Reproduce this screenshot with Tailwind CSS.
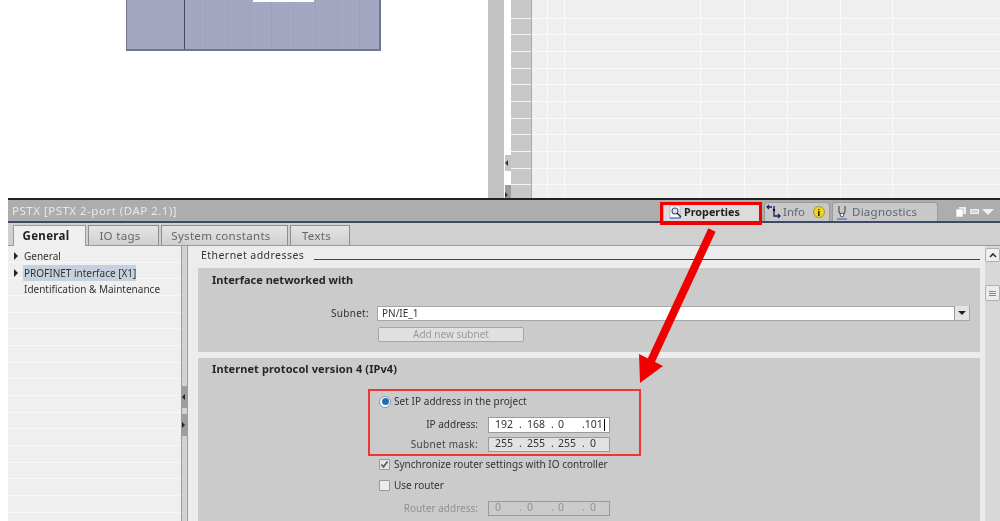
<!DOCTYPE html>
<html lang="en">
<head>
    <meta charset="UTF-8">
    <title>PSTX properties</title>
    <script src="https://cdn.jsdelivr.net/npm/@tailwindcss/browser@4"></script>
</head>
<body class="bg-white">
<div class="relative w-[1000px] h-[521px] overflow-hidden bg-white font-['Noto_Sans',sans-serif] text-[10px] text-[#333] blur-[0.45px]">

    <!-- upper editor area -->
    <div class="flex h-[198px]">
        <div class="w-[488px] pl-[126px]">
            <div class="flex w-[255px] h-[51px] bg-[#a3a7c2] border-l border-r-2 border-b-2 border-[#71758f] relative">
                <div class="w-[58px] border-r border-[#45485f]"></div>
                <div class="flex-1 flex">
                    <div class="w-[21px] border-r border-[#9da1bc]"></div>
                    <div class="w-[22px] border-r border-[#9da1bc]"></div>
                    <div class="w-[22px] border-r border-[#9da1bc]"></div>
                    <div class="w-[22px] border-r border-[#9da1bc]"></div>
                    <div class="w-[22px] border-r border-[#9da1bc]"></div>
                    <div class="w-[22px] border-r border-[#9da1bc]"></div>
                    <div class="w-[22px] border-r border-[#9da1bc]"></div>
                    <div class="w-[22px] border-r border-[#9da1bc]"></div>
                </div>
                <div class="absolute left-[126px] top-0 w-[61px] h-[2px] bg-white"></div>
            </div>
        </div>
        <div class="w-[17px] bg-[#c2c2c2] border-r border-white"></div>
        <div class="w-[6px] bg-white flex flex-col relative">
            <div class="absolute top-[155px] w-full h-[16px] bg-[#c4c4c4] flex items-center"><span class="border-y-[3px] border-r-[3px] border-y-transparent border-r-[#333]"></span></div>
            <div class="absolute top-[185px] w-full h-[13px] bg-[#9c9c9c] flex items-end"><span class="border-y-[3px] border-l-[3px] border-y-transparent border-l-[#333]"></span></div>
        </div>
        <div class="w-[21px] border-r border-[#a8a8a8] bg-[repeating-linear-gradient(to_bottom,#c8c8c8_0,#c8c8c8_15.67px,#f4f4f4_15.67px,#f4f4f4_16.67px)] bg-[position:0_2px]"></div>
        <div class="flex-1 flex bg-[repeating-linear-gradient(to_bottom,#efefef_0,#efefef_15.67px,#fafafa_15.67px,#fafafa_16.67px)] bg-[position:0_2px]">
            <div class="w-[16px] border-r border-[#fafafa]"></div>
            <div class="w-[17px] border-r border-[#fafafa]"></div>
            <div class="w-[136px] border-r border-[#fafafa]"></div>
            <div class="w-[44px] border-r border-[#fafafa]"></div>
            <div class="w-[43px] border-r border-[#fafafa]"></div>
            <div class="w-[53px] border-r border-[#fafafa]"></div>
            <div class="w-[52px] border-r border-[#fafafa]"></div>
        </div>
    </div>

    <!-- inspector panel -->
    <div class="ml-[8px] h-[323px] flex flex-col border-t-2 border-[#222]">
        <div class="h-[23px] shrink-0 flex items-center bg-[#adadad] border-b-2 border-[#3c4a66] pl-[4px]">
            <span class="text-[11.5px] text-[#e8e8e8] tracking-[0.5px]">PSTX [PSTX 2-port (DAP 2.1)]</span>
            <div class="ml-auto flex items-end self-end h-[19px]">
                <div class="w-[98px] h-[19px] bg-[#dcdcdc] flex items-center pl-[5px] font-bold text-[10.8px] text-[#222] rounded-t-sm">
                    <svg width="14" height="14" viewBox="0 0 14 14" fill="none"><rect x="1" y="1" width="10" height="12" fill="#fff" stroke="#9aa6c8" stroke-width="0.7"/><circle cx="6" cy="6" r="3" fill="#dfe6f2" stroke="#47506a" stroke-width="1.1"/><path d="M8 8l4 4" stroke="#333" stroke-width="1.6"/><path d="M1 13h11" stroke="#3a57c8" stroke-width="1"/></svg>
                    <span class="ml-[1px] mt-px">Properties</span>
                </div>
                <div class="ml-[2px] w-[66px] h-[19px] bg-[#c8c8c8] border border-b-0 border-[#9b9b9b] flex items-center pl-[1px] text-[11.5px] text-[#5c6874] rounded-t-sm">
                    <svg width="16" height="16" viewBox="0 0 16 16" fill="none"><path d="M1 3h5M8 2v10h6" stroke="#14205a" stroke-width="1.3"/><path d="M3 1L1 3l2 2M12 10l2 2-2 2" stroke="#14205a" stroke-width="1.2"/><circle cx="8" cy="6" r="1.2" fill="#111"/></svg>
                    <span class="ml-[1px]">Info</span>
                    <span class="ml-[8px] w-[12px] h-[12px] rounded-full bg-[#f2d422] border border-[#a89a20] flex items-center justify-center text-[9px] font-bold text-black leading-none">i</span>
                </div>
                <div class="ml-[2px] w-[106px] h-[19px] bg-[#c8c8c8] border border-b-0 border-[#9b9b9b] flex items-center pl-[3px] gap-[4px] text-[11.5px] text-[#5c6874] tracking-[0.25px] rounded-t-sm">
                    <svg width="12" height="15" viewBox="0 0 12 15" fill="none"><path d="M3 1v5a3 3 0 0 0 6 0V1" stroke="#555" stroke-width="1.2"/><circle cx="6" cy="10" r="1.8" fill="#fff" stroke="#555"/><path d="M1 14h10" stroke="#3a57c8" stroke-width="1"/></svg>
                    <span>Diagnostics</span>
                </div>
                <div class="w-[62px] h-[19px] flex items-center pl-[17px] gap-[3px]">
                    <svg width="12" height="12" viewBox="0 0 12 12"><rect x="4" y="1" width="7" height="7" fill="#eee"/><rect x="1" y="3" width="7" height="8" fill="#fff" stroke="#adadad" stroke-width="0.6"/></svg>
                    <span class="w-[9px] h-[5px] bg-[#d8d8d8] border border-[#efefef]"></span>
                    <span class="border-x-[6px] border-t-[6px] border-x-transparent border-t-[#f0f0f0]"></span>
                </div>
            </div>
        </div>

        <div class="h-[23px] shrink-0 flex items-end bg-[#d0d0d0] border-b border-[#9a9a9a] pl-[5px] text-[11.5px] text-[#666] tracking-[0.3px]">
            <div class="w-[73px] h-[21px] -mb-px pr-[7px] bg-[#efefef] border border-b-0 border-[#9a9a9a] flex items-center justify-center font-bold text-[#222]">General</div>
            <div class="ml-[2px] w-[71px] h-[20px] pr-[7px] bg-linear-to-b from-[#e4e4e4] to-[#d0d0d0] border border-b-0 border-[#8c8c8c] flex items-center justify-center">IO tags</div>
            <div class="ml-[2px] w-[127px] h-[20px] pr-[7px] bg-linear-to-b from-[#e4e4e4] to-[#d0d0d0] border border-b-0 border-[#8c8c8c] flex items-center justify-center">System constants</div>
            <div class="ml-[2px] w-[60px] h-[20px] pr-[7px] bg-linear-to-b from-[#e4e4e4] to-[#d0d0d0] border border-b-0 border-[#8c8c8c] flex items-center justify-center">Texts</div>
        </div>

        <div class="flex-1 flex min-h-0">
            <!-- tree -->
            <div class="w-[173px] shrink-0 pt-[2px] bg-[repeating-linear-gradient(to_bottom,#efefef_0,#efefef_15.67px,#f7f7f7_15.67px,#f7f7f7_16.67px)]">
                <div class="h-[16.67px] flex items-center">
                    <span class="ml-[6px] border-y-[4px] border-l-[4px] border-y-transparent border-l-[#222]"></span>
                    <span class="ml-[6px]">General</span>
                </div>
                <div class="h-[16.67px] flex items-center">
                    <span class="ml-[6px] border-y-[4px] border-l-[4px] border-y-transparent border-l-[#222]"></span>
                    <span class="ml-[5px] w-[113px] h-[16px] pl-[1px] bg-[#c5d2de] leading-[16px] whitespace-nowrap">PROFINET interface [X1]</span>
                </div>
                <div class="h-[16.67px] flex items-center pl-[16px] whitespace-nowrap">Identification &amp; Maintenance</div>
            </div>

            <!-- splitter -->
            <div class="w-[7px] shrink-0 bg-[#d2d2d2] border-x border-[#9c9c9c] relative">
                <div class="absolute top-[140px] w-full h-[22px] bg-[#9e9e9e] flex items-center"><span class="border-y-[3px] border-r-[3px] border-y-transparent border-r-[#222]"></span></div>
                <div class="absolute top-[168px] w-full h-[22px] bg-[#9e9e9e] flex items-center"><span class="border-y-[3px] border-l-[3px] border-y-transparent border-l-[#222]"></span></div>
            </div>

            <!-- content -->
            <div class="flex-1 min-w-0 bg-[#ececec] pl-[10px] pr-[5px] overflow-hidden">
                <div class="h-[22px] pl-[3px] flex items-center text-[10.5px] tracking-[0.45px]">
                    <span class="-mt-[3px]">Ethernet addresses</span>
                    <span class="flex-1 ml-[10px] mt-[5px] h-px bg-[#444]"></span>
                </div>

                <div class="h-[84px] bg-[#cbcbcb] relative">
                    <h2 class="pl-[14px] pt-[4px] font-bold text-[11px] text-[#262626]">Interface networked with</h2>
                    <div class="mt-[17px] flex items-center">
                        <span class="w-[171px] text-right tracking-[0.3px]">Subnet:</span>
                        <div class="ml-[8px] w-[593px] h-[15px] bg-white border border-[#a6a6a6] flex items-center justify-between pl-[4px]">
                            <span>PN/IE_1</span>
                            <span class="w-[15px] h-[14px] bg-[#e4e4e4] border-l border-[#999] flex items-center justify-center"><span class="border-x-[4px] border-t-[4px] border-x-transparent border-t-[#222]"></span></span>
                        </div>
                    </div>
                    <div class="mt-[6px] ml-[180px] w-[146px] h-[15px] bg-[#e0e0e0] border border-[#a6a6a6] rounded-[2px] flex items-center justify-center text-[#9a9a9a]">Add new subnet</div>
                </div>

                <div class="mt-[6px] h-[180px] bg-[#cbcbcb]">
                    <h2 class="pl-[14px] pt-[3px] font-bold text-[11px] text-[#262626] tracking-[0.1px]">Internet protocol version 4 (IPv4)</h2>
                    <div class="mt-[17px] ml-[181px] h-[14px] flex items-center">
                        <span class="w-[12px] h-[12px] rounded-full bg-white border border-[#7f93ad] flex items-center justify-center"><span class="w-[7px] h-[7px] rounded-full bg-[#1f6fb4]"></span></span>
                        <span class="ml-[3px] tracking-[0.05px]">Set IP address in the project</span>
                    </div>
                    <div class="mt-[8px] flex items-center h-[16px]">
                        <span class="w-[280px] text-right">IP address:</span>
                        <div class="ml-[10px] w-[122px] h-[16px] bg-white border border-[#9a9a9a] flex items-center pl-[6px] text-[10.5px]">
                            <span class="w-[32px]">192<span class="ml-[6px]">.</span></span><span class="w-[31px]">168<span class="ml-[6px]">.</span></span><span class="w-[24px]">0</span><span>.101</span><span class="ml-[1px] w-px h-[12px] bg-black"></span>
                        </div>
                    </div>
                    <div class="mt-[4px] flex items-center h-[15px]">
                        <span class="w-[280px] text-right text-[#444] tracking-[0.3px]">Subnet mask:</span>
                        <div class="ml-[10px] w-[122px] h-[15px] bg-[#e2e2e2] border border-[#9a9a9a] flex items-center pl-[6px] text-[10.5px]">
                            <span class="w-[32px]">255<span class="ml-[6px]">.</span></span><span class="w-[31px]">255<span class="ml-[6px]">.</span></span><span class="w-[32px]">255<span class="ml-[6px]">.</span></span><span>0</span>
                        </div>
                    </div>
                    <div class="mt-[6px] ml-[181px] h-[14px] flex items-center">
                        <span class="w-[11px] h-[11px] bg-[#e4e4e4] border border-[#9a9a9a] rounded-[1px] flex items-center justify-center">
                            <svg width="9" height="9" viewBox="0 0 9 9" fill="none"><path d="M1.5 4.5l2 2.5 4-5.5" stroke="#555" stroke-width="1.6"/></svg>
                        </span>
                        <span class="ml-[4px]">Synchronize router settings with IO controller</span>
                    </div>
                    <div class="mt-[7px] ml-[181px] h-[14px] flex items-center">
                        <span class="w-[11px] h-[11px] bg-[#ececec] border border-[#9a9a9a] rounded-[1px]"></span>
                        <span class="ml-[4px]">Use router</span>
                    </div>
                    <div class="mt-[8px] flex items-center h-[15px]">
                        <span class="w-[280px] text-right text-[#929292]">Router address:</span>
                        <div class="ml-[10px] w-[122px] h-[15px] border border-[#9a9a9a] flex items-center pl-[6px] text-[10.5px] text-[#929292]">
                            <span class="w-[32px]">0<span class="ml-[18px]">.</span></span><span class="w-[31px]">0<span class="ml-[18px]">.</span></span><span class="w-[32px]">0<span class="ml-[18px]">.</span></span><span>0</span>
                        </div>
                    </div>
                    <div class="mt-[5px] ml-[181px] w-[12px] h-[12px] rounded-full bg-[#dcdcdc] border border-[#9a9a9a]"></div>
                </div>
            </div>

            <!-- scrollbar -->
            <div class="w-[15px] shrink-0 bg-[#d8d8d8] pt-[2px]">
                <div class="h-[14px] bg-[#efefef] border border-[#b0b0b0] rounded-[2px] flex items-center justify-center">
                    <svg width="8" height="6" viewBox="0 0 8 6" fill="none"><path d="M1 5l3-3 3 3" stroke="#333" stroke-width="1.6"/></svg>
                </div>
                <div class="mt-[23px] h-[16px] bg-[#ececec] border border-[#b0b0b0] rounded-[2px] flex flex-col items-center justify-center gap-px">
                    <span class="w-[7px] h-px bg-[#888]"></span><span class="w-[7px] h-px bg-[#888]"></span><span class="w-[7px] h-px bg-[#888]"></span>
                </div>
            </div>
        </div>
    </div>

    <!-- annotations -->
    <div class="absolute left-[660px] top-[202px] w-[102px] h-[23px] border-[3px] border-[#f00000]"></div>
    <div class="absolute left-[368px] top-[389px] w-[273px] h-[67px] border-2 border-[#f03535]"></div>
    <svg class="absolute left-[630px] top-[225px]" width="100" height="165" viewBox="0 0 100 165" fill="none">
        <path d="M82 5L21 136" stroke="#f00000" stroke-width="8"/>
        <path d="M10 158L9 129L33 141Z" fill="#f00000"/>
    </svg>
</div>
</body>
</html>
